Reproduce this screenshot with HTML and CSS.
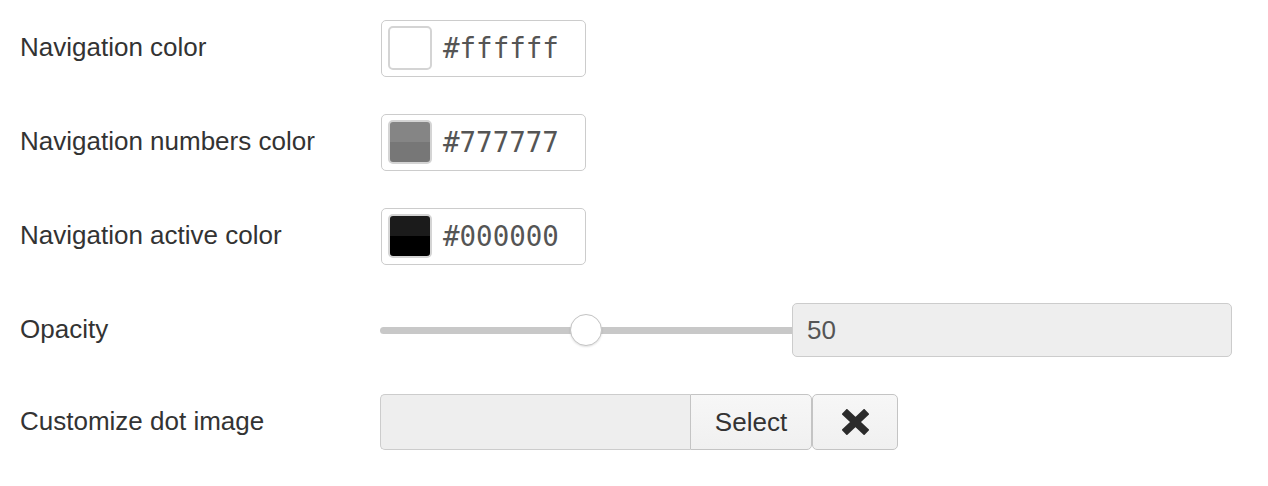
FILE: index.html
```html
<!DOCTYPE html>
<html>
<head>
<meta charset="utf-8">
<link rel="stylesheet" href="styles.css">
</head>
<body>
<div class="form">
  <div class="row">
    <div class="label">Navigation color</div>
    <div class="color-box">
      <span class="swatch swatch-white"></span>
      <span class="hex">#ffffff</span>
    </div>
  </div>
  <div class="row">
    <div class="label">Navigation numbers color</div>
    <div class="color-box">
      <span class="swatch swatch-gray"></span>
      <span class="hex">#777777</span>
    </div>
  </div>
  <div class="row">
    <div class="label">Navigation active color</div>
    <div class="color-box">
      <span class="swatch swatch-black"></span>
      <span class="hex">#000000</span>
    </div>
  </div>
  <div class="row">
    <div class="label">Opacity</div>
    <div class="range-group">
      <input class="range" type="range" min="0" max="100" value="50">
      <div class="number">50</div>
    </div>
  </div>
  <div class="row row-last">
    <div class="label">Customize dot image</div>
    <div class="file-group">
      <div class="file-input"></div>
      <div class="btn btn-select">Select</div>
      <div class="btn btn-clear">
        <svg width="27" height="26" viewBox="0 0 27 26"><path d="M5 5 L22 21 M22 5 L5 21" stroke="#2b2b2b" stroke-width="7.5" stroke-linecap="square" fill="none"/></svg>
      </div>
    </div>
  </div>
</div>
</body>
</html>
```

FILE: styles.css
```css
html, body {
  margin: 0;
  padding: 0;
  background: #ffffff;
}
body {
  font-family: "Liberation Sans", Arial, sans-serif;
  color: #333333;
}
.form {
  display: flex;
  flex-direction: column;
  gap: 38px;
  padding: 20px 0 0 21px;
}
.row {
  display: flex;
  align-items: center;
  height: 56px;
}
.row-last {
  margin-top: -2px;
}
.label {
  width: 359px;
  flex: none;
  font-size: 26px;
  color: #333333;
  margin-left: -1px;
  padding-right: 1px;
  margin-top: -2px;
}
.color-box {
  box-sizing: border-box;
  width: 205px;
  height: 57px;
  margin-left: 1px;
  border: 1px solid #cccccc;
  border-radius: 5px;
  display: flex;
  align-items: center;
  padding-left: 6px;
  gap: 11px;
}
.swatch {
  box-sizing: border-box;
  width: 44px;
  height: 44px;
  border: 2px solid #d4d4d4;
  border-radius: 5px;
  flex: none;
}
.swatch-white {
  background: #ffffff;
}
.swatch-gray {
  background: linear-gradient(to bottom, #858585 0, #858585 50%, #777777 50%, #777777 100%);
}
.swatch-black {
  background: linear-gradient(to bottom, #1b1b1b 0, #1b1b1b 50%, #000000 50%, #000000 100%);
}
.hex {
  font-family: "DejaVu Sans Mono", "Liberation Mono", monospace;
  font-size: 27.5px;
  color: #555555;
}
.range-group {
  display: flex;
  align-items: center;
}
.range {
  -webkit-appearance: none;
  appearance: none;
  width: 412px;
  height: 34px;
  margin: 0;
  padding: 0;
  background: transparent;
}
.range::-webkit-slider-runnable-track {
  height: 7px;
  background: #c8c8c8;
  border-radius: 4px 0 0 4px;
}
.range::-webkit-slider-thumb {
  -webkit-appearance: none;
  appearance: none;
  box-sizing: border-box;
  width: 32px;
  height: 32px;
  margin-top: -12.5px;
  border-radius: 50%;
  background: #ffffff;
  border: 1px solid #c4c4c4;
  box-shadow: 0 1px 2px rgba(0, 0, 0, 0.12);
}
.number {
  box-sizing: border-box;
  width: 440px;
  height: 54px;
  background: #eeeeee;
  border: 1px solid #cccccc;
  border-radius: 5px;
  padding-left: 14px;
  display: flex;
  align-items: center;
  font-size: 26px;
  color: #555555;
}
.file-group {
  display: flex;
  height: 56px;
}
.file-input {
  box-sizing: border-box;
  width: 310px;
  height: 56px;
  background: #eeeeee;
  border: 1px solid #cccccc;
  border-right: none;
  border-radius: 5px 0 0 5px;
}
.btn {
  box-sizing: border-box;
  height: 56px;
  display: flex;
  align-items: center;
  justify-content: center;
  background: linear-gradient(to bottom, #f7f7f7, #f0f0f0);
  border: 1px solid #c4c4c4;
  font-size: 26px;
  color: #333333;
}
.btn-select {
  width: 122px;
  border-radius: 0 5px 5px 0;
}
.btn-clear {
  width: 86px;
  border-radius: 5px;
}
```
